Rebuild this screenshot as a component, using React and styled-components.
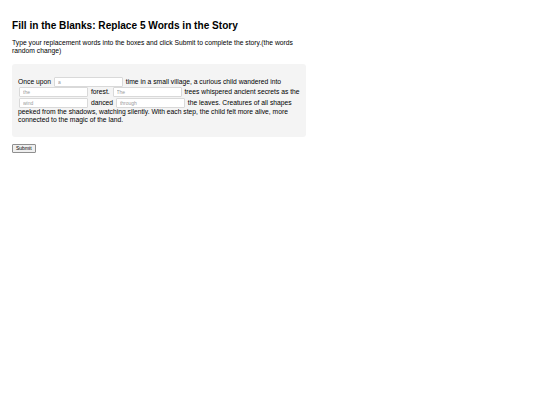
import React, { useState } from 'react';
import styled, { createGlobalStyle } from 'styled-components';

const GlobalStyle = createGlobalStyle`
  html, body {
    margin: 0;
    padding: 0;
    background: #ffffff;
  }
  body {
    font-family: "Liberation Sans", Arial, sans-serif;
    color: #000000;
  }
`;

const story = [
  { text: 'Once upon ' },
  { blank: 'a' },
  { text: ' time in a small village, a curious child wandered into ' },
  { blank: 'the' },
  { text: ' forest. ' },
  { blank: 'The' },
  { text: ' trees whispered ancient secrets as the ' },
  { blank: 'wind' },
  { text: ' danced ' },
  { blank: 'through' },
  {
    text:
      ' the leaves. Creatures of all shapes peeked from the shadows, watching silently. With each step, the child felt more alive, more connected to the magic of the land.',
  },
];

const App = () => {
  const [words, setWords] = useState({});

  const handleChange = (i, value) => {
    setWords({ ...words, [i]: value });
  };

  return (
    <Page>
      <GlobalStyle />
      <Title>Fill in the Blanks: Replace 5 Words in the Story</Title>
      <Intro>
        Type your replacement words into the boxes and click Submit to complete
        the story.(the words random change)
      </Intro>
      <StoryBox>
        {story.map((part, i) =>
          part.blank ? (
            <BlankInput
              key={i}
              type="text"
              placeholder={part.blank}
              value={words[i] || ''}
              onChange={(e) => handleChange(i, e.target.value)}
            />
          ) : (
            <React.Fragment key={i}>{part.text}</React.Fragment>
          )
        )}
      </StoryBox>
      <SubmitButton type="button">Submit</SubmitButton>
    </Page>
  );
};

export default App;

const Page = styled.div`
  padding: 12px;
  width: 294px;
`;

const Title = styled.h1`
  font-size: 10.1px;
  font-weight: 700;
  line-height: 12px;
  margin: 8px 0 0;
`;

const Intro = styled.p`
  font-size: 6.75px;
  line-height: 8px;
  margin: 7px 0 0;
`;

const StoryBox = styled.div`
  margin-top: 9px;
  background: #f4f4f4;
  border-radius: 3px;
  padding: 13px 6px 12.5px;
  font-size: 6.75px;
  line-height: 8.4px;
`;

const BlankInput = styled.input`
  width: 69px;
  height: 10px;
  box-sizing: border-box;
  margin: 0.15px 1px;
  padding: 0 3px;
  border: 0.5px solid #d9d9d9;
  border-radius: 1px;
  background: #ffffff;
  font-family: "Liberation Sans", Arial, sans-serif;
  font-size: 5px;
  vertical-align: middle;
  outline: none;
  &::placeholder {
    color: #9a9a9a;
  }
`;

const SubmitButton = styled.button`
  display: block;
  margin-top: 6.5px;
  height: 9px;
  padding: 0 3px;
  font-family: "Liberation Sans", Arial, sans-serif;
  font-size: 5px;
  line-height: 7px;
  color: #000000;
  background: #efefef;
  border: 0.5px solid #8f8f8f;
  border-radius: 1px;
`;
